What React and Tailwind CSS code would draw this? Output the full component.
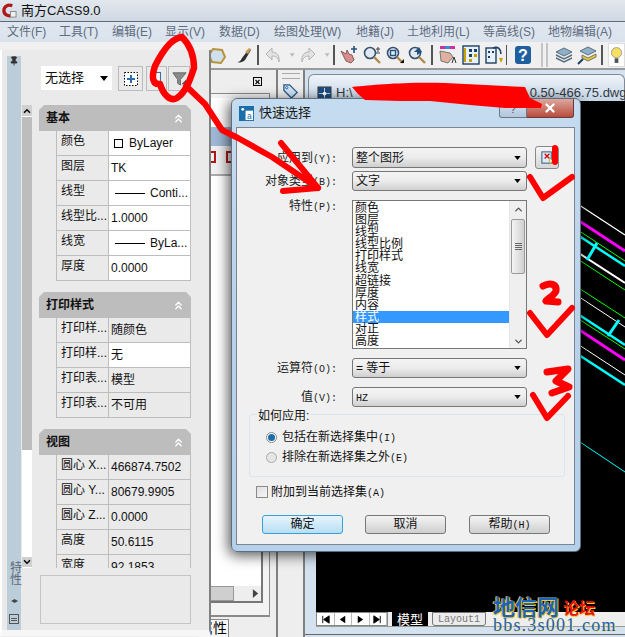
import React from "react";
import { ChevronsUp, ChevronUp, ChevronDown, X, Pin } from "lucide-react";

const Lat = ({ children }) => <span className="[font-family:'Liberation_Mono',monospace] text-[10px]">{children}</span>;

const menus = [
  ["文件(F)", "w-[52px]"], ["工具(T)", "w-[53px]"], ["编辑(E)", "w-[53px]"], ["显示(V)", "w-[54px]"], ["数据(D)", "w-[55px]"],
  ["绘图处理(W)", "w-[82px]"], ["地籍(J)", "w-[51px]"], ["土地利用(L)", "w-[76px]"], ["等高线(S)", "w-[65px]"], ["地物编辑(A)", "w-[70px]"],
];

const Sep = ({ c = "mx-[4px]" }) => <div className={`w-[2px] h-[20px] bg-[#555] ${c}`} />;

const Ic = ({ className = "", children }) => (
  <svg viewBox="0 0 20 20" className={`w-[20px] h-[20px] shrink-0 ${className}`}>{children}</svg>
);

const Mag = ({ inner }) => (<>
  <circle cx="8" cy="8" r="5.5" fill="#dfeaf5" stroke="#37506e" strokeWidth="1.6" />
  <path d="M12 12l6 6" stroke="#b08a4a" strokeWidth="2.4" />
  {inner}
</>);

function Toolbar() {
  return (
    <div className="h-[26px] bg-[#f0f0f0] flex items-center pl-[207px] border-b-0">
      <Ic><path d="M6 4l9 1 3 7-4 6-9-1-3-7z" fill="#cfe0f0" stroke="#b9933a" strokeWidth="2" /></Ic>
      <Ic className="ml-[6px]"><path d="M4 17c3 0 4-2 5-4l7-9 2 1-6 10c-2 2-5 3-8 2z" fill="#2e2e2e" /><path d="M12 7l4-4 2 1-3 5z" fill="#c79a55" /></Ic>
      <Sep />
      <Ic><path d="M9 3L3 9l6 6v-4c4 0 6 2 7 6 1-6-2-10-7-10z" fill="#e2e2e2" stroke="#b3b3b3" /></Ic>
      <svg viewBox="0 0 10 10" className="w-[10px] h-[10px] ml-[5px]"><path d="M2 3h6l-3 4z" fill="#bbb" /></svg>
      <Ic className="ml-[2px]"><path d="M11 3l6 6-6 6v-4c-4 0-6 2-7 6-1-6 2-10 7-10z" fill="#e2e2e2" stroke="#b3b3b3" /></Ic>
      <svg viewBox="0 0 10 10" className="w-[10px] h-[10px] ml-[5px]"><path d="M2 3h6l-3 4z" fill="#bbb" /></svg>
      <Sep c="ml-[2px] mr-[4px]" />
      <Ic><path d="M2 6l5 3 1-4 2 4 3 1 2 5-3 3-5-2z" fill="#d58f8f" stroke="#8c5a5a" /><path d="M15 1v7M12 4h6" stroke="#23527c" strokeWidth="1.6" /></Ic>
      <Ic className="ml-[3px]"><Mag inner={<path d="M16 2v5M14 4h4M14 8h4" stroke="#444" strokeWidth="1" />} /></Ic>
      <Ic className="ml-[3px]"><Mag inner={<><rect x="5.5" y="5.5" width="5" height="5" fill="none" stroke="#23527c" strokeWidth="1.4" /><path d="M15 18h4v-4z" fill="#111" /></>} /></Ic>
      <Ic className="ml-[2px]"><Mag inner={<path d="M12 2L7 7h3v3l5-3z" fill="#23527c" />} /></Ic>
      <Sep c="mx-[4px]" />
      <Ic className="ml-[1px]"><rect x="2" y="1" width="15" height="3" fill="#d0309a" /><rect x="7" y="1" width="5" height="3" fill="#3a8ad0" /><path d="M2 6l10 2 3 4-5 6-7-2z" fill="#e0b0a0" stroke="#777" /><path d="M14 18l2-6 2 6" fill="none" stroke="#333" /></Ic>
      <Ic className="ml-[3px]"><rect x="2" y="1" width="16" height="18" fill="#e9f1f8" stroke="#1d3f66" strokeWidth="1.4" /><path d="M4 3v14" stroke="#c9a000" strokeWidth="2" /><rect x="8" y="4" width="3" height="3" fill="#1d3f66" /><rect x="13" y="4" width="3" height="3" fill="#1d3f66" /><rect x="8" y="9" width="3" height="3" fill="#1d3f66" /><rect x="13" y="9" width="3" height="3" fill="#c9a000" /><rect x="8" y="14" width="3" height="3" fill="#c9a000" /></Ic>
      <Ic className="ml-[3px]"><rect x="2" y="3" width="10" height="15" fill="#e9f1f8" stroke="#1d3f66" strokeWidth="1.4" /><rect x="4" y="6" width="2" height="2" fill="#1d3f66" /><rect x="8" y="6" width="2" height="2" fill="#1d3f66" /><rect x="4" y="11" width="2" height="2" fill="#1d3f66" /><path d="M9 3c5-2 8 1 8 6" fill="none" stroke="#1d3f66" strokeWidth="1.6" /><path d="M15 13h4l-2 5z" fill="#c9a000" /></Ic>
      <Sep c="ml-[2px] mr-[6px]" />
      <Ic><rect x="2" y="1" width="16" height="18" rx="3" fill="#1f5fa0" /><text x="10" y="16" textAnchor="middle" fontSize="16" fontWeight="700" fill="#fff" fontFamily="Liberation Sans">?</text></Ic>
      <div className="ml-[8px] w-[8px] h-[24px] border-x-2 border-[#c4c4c4]" />
      <Ic className="ml-[6px]"><path d="M10 3l8 4-8 4-8-4z" fill="#8fb0c8" stroke="#5a6e80" /><path d="M2 10l8 4 8-4M2 13l8 4 8-4" fill="none" stroke="#5a6e80" strokeWidth="1.4" /></Ic>
      <Ic className="ml-[3px]"><path d="M11 2l8 4-8 4-8-4z" fill="#8fb0c8" stroke="#5a6e80" /><path d="M5 10l6 3 8-4v3l-8 4-6-3z" fill="#e6c53c" stroke="#776" /><path d="M1 19l5-5" stroke="#1d3f66" strokeWidth="2" /></Ic>
      <Sep c="ml-[4px] mr-[5px]" />
      <div className="w-[20px] h-[24px] bg-white border border-[#ddd] flex items-center justify-center">
        <svg viewBox="0 0 14 20" className="w-[13px] h-[19px]"><circle cx="7" cy="7" r="5.5" fill="#f6e05e" stroke="#999" /><rect x="5" y="13" width="4" height="5" fill="#555" /></svg>
      </div>
    </div>
  );
}

const drawLines = [
  ["#fff", 1.2, 316, 33, 625, 235], ["#ff00ff", 2.8, 316, 48, 625, 251], ["#00ff00", 1, 316, 58, 625, 261], ["#00ffff", 2.4, 316, 64, 625, 266],
  ["#fff", 2, 316, 83, 625, 283], ["#00ff00", 1, 316, 88, 625, 290], ["#00ff00", 1, 316, 118, 625, 318], ["#fff", 1, 316, 124, 625, 327],
  ["#00ffff", 2.4, 316, 142, 625, 345], ["#00ff00", 1, 316, 149, 625, 349], ["#ff00ff", 2.8, 316, 156, 625, 360], ["#fff", 1, 316, 173, 625, 375],
  ["#00ffff", 2.4, 316, 184, 625, 385], ["#00ffff", 3, 587, 260, 597, 243], ["#00ffff", 3, 608, 336, 619, 320], ["#00ffff", 1, 316, 266, 625, 472],
];

function Mdi() {
  return (
    <div className="flex-1 min-w-0 overflow-hidden bg-[#d4e2f0] border-l-2 border-[#808080] relative">
      <div className="h-[27px] mt-[4px] ml-[3px] rounded-t-[6px] border border-[#808a96] border-b-0 bg-gradient-to-b from-[#eef3f8] to-[#c5d6e7] flex items-start pl-[8px] pt-[11px]">
        <svg viewBox="0 0 16 16" className="w-[15px] h-[15px] shrink-0"><rect x="1" y="1" width="14" height="14" fill="#1d4c80" stroke="#444" /><path d="M8 2v12M2 8h12" stroke="#bde" /><circle cx="8" cy="8" r="2" fill="#fff" /></svg>
        <span className="ml-[4px] text-[13px] leading-[14px] text-[#333a44] whitespace-nowrap">H:\</span>
        <span className="ml-[177px] text-[13px] leading-[14px] text-[#333a44] whitespace-nowrap">0.50-466.75.dwg</span>
      </div>
      <div className="ml-[11px] h-[511px] bg-black relative">
        <svg viewBox="316 101 309 511" className="w-[309px] h-[511px] block">
          {drawLines.map(([c, w, a, b, d, e], i) => <line key={i} x1={a} y1={b} x2={d} y2={e} stroke={c} strokeWidth={w} />)}
        </svg>
      </div>
      <div className="ml-[11px] h-[15px] bg-[#eeeeee] flex items-stretch border-b border-[#9a9a9a]">
        <div className="w-[72px] flex border border-[#888] bg-white">
          {[
            <path key="a" d="M3 2v8M10 2v8L4 6z" stroke="#000" fill="#000" />,
            <path key="b" d="M9 2v8L3 6z" fill="#000" />,
            <path key="c" d="M3 2v8l6-4z" fill="#000" />,
            <path key="d" d="M2 2v8l6-4zM9 2v8" stroke="#000" fill="#000" />,
          ].map((p) => (
            <div key={p.key} className="flex-1 flex items-center justify-center border-r border-[#bbb]">
              <svg viewBox="0 0 12 12" className="w-[11px] h-[11px]">{p}</svg>
            </div>
          ))}
        </div>
        <div className="ml-[4px] w-[36px] bg-black text-white text-[13px] leading-[15px] text-center">模型</div>
        <div className="ml-[4px] w-[54px] border border-[#777] bg-[#ececec] text-[#777] text-[10px] leading-[13px] text-center [font-family:'Liberation_Mono',monospace] rounded-b-[3px]">Layout1</div>
      </div>
      <div className="h-[7px]" />
      <div className="h-[1px] bg-[#666]" />
      <div className="absolute left-[188px] top-[529px] w-[132px] h-[34px] [font-family:'Liberation_Serif','Noto_Sans_CJK_SC',serif]">
        <div className="flex items-end leading-[18px] whitespace-nowrap">
          <span className="text-[22px] leading-[18px] font-bold text-[#1c63b8] [text-shadow:1px_1px_0_#f0c830,-1px_0_0_#f0c830]">地信网</span>
          <span className="text-[16px] leading-[16px] ml-[4px] font-bold text-[#e81010] [text-shadow:1px_1px_0_#f0c830]">论坛</span>
        </div>
        <div className="text-[18px] leading-[16px] text-[#1c63b8] tracking-[1.2px] [text-shadow:1px_1px_0_#f6de80] whitespace-nowrap">bbs.3s001.com</div>
      </div>
    </div>
  );
}

function LeftDock() {
  return (
    <div className="w-[303px] bg-[#eeeeee] flex">
      <div className="w-[276px] flex flex-col">
        <div className="h-[23px] flex justify-end items-center pr-[14px]">
          <div className="w-[9px] h-[9px] border border-black flex items-center justify-center"><X size={8} strokeWidth={4} /></div>
        </div>
        <div className="ml-[208px] mr-[6px] h-[524px] border-t border-r border-b-2 border-[#8a8a8a] bg-[#f3f3f3] pr-[6px] pb-[12px] pt-[4px]">
          <div className="h-full bg-white border-r-2 border-b-2 border-[#777] flex flex-col">
            <div className="h-[29px]" />
            <div className="h-[19px] bg-[#9db7d4]" />
            <div className="h-[30px] bg-[#f0f0f0] border-b-2 border-[#aaa] flex gap-[10px] pl-[2px] pt-[5px]">
              <div className="w-[6px] h-[12px] border-y-2 border-r-2 border-[#b01818]" />
              <div className="w-[8px] h-[12px] border-2 border-[#b01818]" />
            </div>
            <div className="flex-1" />
            <div className="h-[15px] bg-[#eeeeee] flex items-center justify-end pr-[2px]">
              <div className="flex-1 h-full bg-[#cfcfcf] mr-[18px] border border-[#999]" />
              <svg viewBox="0 0 8 10" className="w-[7px] h-[9px]"><path d="M1 0l6 5-6 5z" fill="#444" /></svg>
            </div>
          </div>
        </div>
        <div className="ml-[199px] w-[30px] h-[18px] border-r border-t border-[#888] text-[14px] leading-[17px] text-right whitespace-nowrap mt-[2px] bg-[#f6f6f6] text-black pr-[1px]">属性</div>
      </div>
      <div className="w-[27px] border-l-2 border-[#808080] flex flex-col items-center pt-[3px]">
        <div className="w-[18px] h-[6px] border-y border-[#aaa]" />
        <svg viewBox="0 0 18 18" className="w-[17px] h-[17px] mt-[3px]"><path d="M2 3h6l8 8-6 6-8-8z" fill="#cfe2f5" stroke="#2a5c8e" strokeWidth="1.4" /><circle cx="5" cy="6" r="1.2" fill="#fff" stroke="#2a5c8e" /></svg>
      </div>
    </div>
  );
}

const Row = ({ k, v, white }) => (
  <div className="flex h-[25px] border-b border-[#bdbdbd] ml-[17px] border-l">
    <div className="w-[52px] border-r border-[#bdbdbd] text-[12px] leading-[20px] pl-[4px] whitespace-nowrap overflow-hidden bg-[#eaeaea]">{k}</div>
    <div className={`flex-1 text-[12px] leading-[24px] pl-[2px] whitespace-nowrap overflow-hidden border-r border-[#bdbdbd] ${white ? "bg-white" : "bg-[#eaeaea]"}`}>{v}</div>
  </div>
);

const Line = ({ t }) => (
  <div className="flex items-center pl-[4px] gap-[5px]"><span className="w-[30px] h-[1px] bg-black shrink-0" /><span>{t}</span></div>
);

const Header = ({ t }) => (
  <div className="h-[26px] bg-[#bdbdbd] [clip-path:polygon(5px_0,calc(100%-5px)_0,100%_5px,100%_100%,0_100%,0_5px)] flex items-center justify-between pl-[7px] pr-[6px] text-[12px] font-bold">
    <span>{t}</span>
    <ChevronsUp size={13} color="#fff" strokeWidth={2.4} />
  </div>
);

function Palette() {
  return (
    <div className="absolute left-0 top-[50px] w-[211px] h-[586px] bg-[#eaeaea] border-l-2 border-white border-r-2 border-r-[#808080] border-b-[6px] border-b-[#f6f6f6] flex">
      <div className="ml-[5px] w-[14px] mt-[6px] bg-[#bccdda] flex flex-col items-center">
        <Pin size={10} fill="#333" color="#333" />
        <div className="flex-1" />
        <div className="[writing-mode:vertical-rl] text-[12px] text-[#5a6a78] leading-[14px] -mr-[1px]">特性</div>
        <div className="text-[8px] text-[#444] mt-[10px] tracking-[-1px]">◂▸</div>
        <div className="w-[10px] h-[10px] mt-[7px] mb-[6px] border border-[#555] flex flex-col justify-center gap-[1px] px-[1px]">
          <div className="h-[1px] bg-[#555]" /><div className="h-[1px] bg-[#555]" />
        </div>
      </div>
      <div className="flex-1 flex flex-col min-w-0">
        <div className="h-[55px] pt-[16px] pl-[20px] flex gap-[6px]">
          <div className="w-[71px] h-[24px] bg-white flex items-center justify-between px-[4px] text-[13px]">
            <span>无选择</span>
            <svg viewBox="0 0 8 5" className="w-[8px] h-[5px]"><path d="M0 0h8L4 5z" fill="#000" /></svg>
          </div>
          <div className="w-[25px] h-[25px] border border-[#bbb] flex items-center justify-center">
            <svg viewBox="0 0 16 16" className="w-[16px] h-[16px]"><rect x="1.5" y="1.5" width="13" height="13" fill="#fff" stroke="#000" strokeDasharray="1.5 1.5" /><path d="M8 4v8M4 8h8" stroke="#2a6cb0" strokeWidth="2" /></svg>
          </div>
          <div className="-ml-[3px] w-[21px] h-[25px] border border-[#bbb] flex items-center justify-center">
            <div className="w-[9px] h-[13px] border border-[#3a6ea8] bg-[#eef4fb]" />
          </div>
          <div className="-ml-[5px] w-[22px] h-[25px] border border-[#bbb] flex items-center justify-center">
            <svg viewBox="0 0 18 18" className="w-[17px] h-[17px]"><path d="M2 3h14L10 10v6l-3-2v-4z" fill="#8a8a8a" stroke="#666" /><path d="M11 15l5-5v5z" fill="#555" /></svg>
          </div>
        </div>
        <div className="h-[463px] flex overflow-hidden">
          <div className="ml-[1px] w-[10px] flex flex-col bg-white">
            <div className="h-[11px] bg-[#d0d0d0] flex items-center justify-center"><ChevronUp size={10} strokeWidth={4} /></div>
            <div className="h-[333px] mt-[1px] bg-[#bdbdbd]" />
            <div className="flex-1" />
            <div className="h-[10px] mb-[1px] bg-[#d0d0d0] flex items-center justify-center"><ChevronDown size={10} strokeWidth={4} /></div>
          </div>
          <div className="w-[152px] ml-[7px]">
            <Header t="基本" />
            <Row white k="颜色" v={<span className="flex items-center gap-[6px] pl-[3px]"><span className="w-[9px] h-[9px] border border-black" />ByLayer</span>} />
            <Row white k="图层" v="TK" />
            <Row white k="线型" v={<Line t="Conti..." />} />
            <Row white k="线型比..." v="1.0000" />
            <Row white k="线宽" v={<Line t="ByLa..." />} />
            <Row white k="厚度" v="0.0000" />
            <div className="h-[11px]" />
            <Header t="打印样式" />
            <Row k="打印样..." v="随颜色" />
            <Row white k="打印样..." v="无" />
            <Row k="打印表..." v="模型" />
            <Row k="打印表..." v="不可用" />
            <div className="h-[11px]" />
            <Header t="视图" />
            <Row k="圆心 X..." v="466874.7502" />
            <Row k="圆心 Y..." v="80679.9905" />
            <Row k="圆心 Z..." v="0.0000" />
            <Row k="高度" v="50.6115" />
            <Row k="宽度" v="92.1853" />
          </div>
        </div>
        <div className="ml-[19px] mt-[7px] w-[151px] h-[49px] border border-[#c4c4c4]" />
      </div>
    </div>
  );
}

const Combo = ({ t, mt = "", h = "h-[21px]" }) => (
  <div className={`w-[175px] ${h} ${mt} rounded-[3px] border border-[#777] bg-gradient-to-b from-[#f4f4f4] via-[#ececec] to-[#cfcfcf] flex items-center justify-between pl-[3px] pr-[5px] text-[12px] shrink-0`}>
    <span>{t}</span>
    <svg viewBox="0 0 8 5" className="w-[7px] h-[4px]"><path d="M0 0h8L4 5z" fill="#000" /></svg>
  </div>
);

const Label = ({ children, cls = "" }) => (
  <div className={`w-[100px] mr-[15px] text-right text-[12px] text-[#222] whitespace-nowrap shrink-0 ${cls}`}>{children}</div>
);

const DBtn = ({ children, primary }) => (
  <div className={`w-[81px] h-[19px] rounded-[3px] border text-[12px] leading-[17px] text-center ${primary ? "border-[#3a9fd8] bg-gradient-to-b from-[#e6f5fd] to-[#b8def2]" : "border-[#777] bg-gradient-to-b from-[#f4f4f4] to-[#cfcfcf]"}`}>{children}</div>
);

const listItems = ["颜色", "图层", "线型", "线型比例", "打印样式", "线宽", "超链接", "厚度", "内容", "样式", "对正", "高度"];

function Dialog() {
  return (
    <div className="absolute left-[231px] top-[98px] w-[350px] h-[454px] rounded-[6px] bg-gradient-to-b from-[#c5dcf0] via-[#b9d1ea] to-[#b4d0ea] border border-[#5e6e7e] shadow-[-2px_3px_14px_rgba(0,0,0,0.7)] flex flex-col">
      <div className="h-[28px] flex items-start relative shrink-0">
        <svg viewBox="0 0 16 16" className="w-[15px] h-[15px] ml-[7px] mt-[7px]"><rect width="16" height="16" fill="#1b6ea8" /><rect x="7" y="5" width="8" height="10" fill="#fff" /><text x="11" y="14" textAnchor="middle" fontSize="9" fill="#1b6ea8" fontFamily="Liberation Sans">a</text><circle cx="4" cy="3.5" r="1.5" fill="#fff" /></svg>
        <span className="ml-[5px] mt-[4px] text-[13px] text-[#1b1b1b]">快速选择</span>
        <div className="absolute right-[6px] top-0 flex">
          <div className="w-[28px] h-[19px] bg-gradient-to-b from-[#dbe7f3] to-[#b2c7dc] border border-[#6b7a88] border-t-0 rounded-bl-[3px] flex items-end justify-center text-[10px] text-[#444]">?</div>
          <div className="w-[47px] h-[19px] bg-gradient-to-b from-[#dba79f] to-[#b84a3c] border border-[#6b3a34] border-l-0 border-t-0 rounded-br-[3px] flex items-center justify-center">
            <X size={14} color="#fff" strokeWidth={4} />
          </div>
        </div>
      </div>
      <div className="ml-[4px] mr-[5px] mb-[6px] flex-1 bg-[#f0f0f0] border border-[#7a8591] pt-[18px] text-[#111]">
        <div className="flex items-center">
          <Label>应用到<Lat>(Y):</Lat></Label>
          <Combo t="整个图形" />
          <div className="ml-[8px] w-[24px] h-[23px] rounded-[3px] border border-[#888] bg-gradient-to-b from-[#f6f6f6] to-[#d6d6d6] flex items-center justify-center">
            <svg viewBox="0 0 16 16" className="w-[15px] h-[15px]"><rect x="2" y="2" width="10" height="12" fill="#dfeaf6" stroke="#23527c" /><path d="M5 4l5 5M10 4l-5 5" stroke="#d01010" strokeWidth="1.5" /><path d="M10 8v7l2-2 3 0z" fill="#f6e9a6" stroke="#a08a30" strokeWidth=".6" /></svg>
          </div>
        </div>
        <div className="flex items-center mt-[2px]">
          <Label>对象类型<Lat>(B):</Lat></Label>
          <Combo t="文字" h="h-[20px]" />
        </div>
        <div className="flex items-start mt-[9px]">
          <Label cls="-mt-[3px]">特性<Lat>(P):</Lat></Label>
          <div className="w-[175px] h-[149px] border border-[#777] bg-white flex overflow-hidden">
            <div className="flex-1 text-[12px] leading-[12.1px] pt-[1px]">
              {listItems.map((s) => (
                <div key={s} className={`h-[12.1px] pl-[2px] whitespace-nowrap ${s === "样式" ? "bg-[#3399ff] text-white" : ""}`}>{s}</div>
              ))}
            </div>
            <div className="w-[17px] bg-[#efefef] flex flex-col items-center border-l border-[#e6e6e6]">
              <ChevronUp size={11} color="#555" strokeWidth={3} className="mt-[3px]" />
              <div className="w-[14px] h-[55px] mt-[4px] rounded-[2px] border border-[#9a9a9a] bg-gradient-to-r from-[#f4f4f4] to-[#d0d0d0] flex flex-col items-center justify-center gap-[1px]">
                <div className="w-[7px] h-[1px] bg-[#666]" /><div className="w-[7px] h-[1px] bg-[#666]" /><div className="w-[7px] h-[1px] bg-[#666]" /><div className="w-[7px] h-[1px] bg-[#666]" />
              </div>
              <div className="flex-1" />
              <ChevronDown size={11} color="#555" strokeWidth={3} className="mb-[1px]" />
            </div>
          </div>
        </div>
        <div className="flex items-center mt-[9px]">
          <Label>运算符<Lat>(O):</Lat></Label>
          <Combo t="= 等于" h="h-[20px]" />
        </div>
        <div className="flex items-center mt-[9px]">
          <Label>值<Lat>(V):</Lat></Label>
          <Combo t={<Lat>HZ</Lat>} h="h-[20px]" />
        </div>
        <div className="relative ml-[12px] mt-[7px] w-[316px] h-[63px] rounded-[3px] border border-[#dce5ec] pt-[12px] pl-[16px] text-[12px]">
          <div className="absolute left-[7px] -top-[8px] bg-[#f0f0f0] px-[1px]">如何应用:</div>
          <div className="flex items-center gap-[5px] h-[20px]">
            <span className="w-[11px] h-[11px] rounded-full border border-[#888] bg-white flex items-center justify-center"><span className="w-[7px] h-[7px] rounded-full bg-[#1a6fa8]" /></span>
            <span>包括在新选择集中<Lat>(I)</Lat></span>
          </div>
          <div className="flex items-center gap-[5px] h-[20px]">
            <span className="w-[11px] h-[11px] rounded-full border border-[#aaa] bg-[#e6e6e6]" />
            <span>排除在新选择集之外<Lat>(E)</Lat></span>
          </div>
        </div>
        <div className="flex items-center ml-[19px] mt-[8px] gap-[3px] text-[12px] h-[13px]">
          <span className="w-[12px] h-[12px] border border-[#8a8a8a] bg-gradient-to-br from-[#e0e0e0] to-[#f6f6f6]" />
          <span>附加到当前选择集<Lat>(A)</Lat></span>
        </div>
        <div className="flex ml-[25px] mt-[17px] gap-[22px]">
          <DBtn primary>确定</DBtn>
          <DBtn>取消</DBtn>
          <div className="ml-[1px]"><DBtn>帮助<Lat>(H)</Lat></DBtn></div>
        </div>
      </div>
    </div>
  );
}

function Scribbles() {
  const common = { fill: "none", stroke: "#ff0000", strokeLinecap: "round", strokeLinejoin: "round" };
  return (
    <svg viewBox="0 0 625 637" className="absolute inset-0 w-[625px] h-[637px] pointer-events-none">
      <path {...common} strokeWidth="6.5" d="M182 37C172 38 163 50 155 66C151 78 153 85 160 84C163 94 170 102 177 98C186 92 190 80 194 68C194 55 189 44 182 37" />
      <path {...common} strokeWidth="6" d="M186 86L205 104L222 130L238 138L272 157L318 188" />
      <path {...common} strokeWidth="6" d="M281 143L318 188L283 191" />
      <path fill="#ff0000" d="M352 87C375 85 400 82 445 83L525 87L530 98L542 104L541 108L505 108L470 105L430 101L400 101L365 100L358 94z" />
      <path {...common} strokeWidth="6" d="M555 148V162" />
      <path {...common} strokeWidth="6" d="M530 177L543 198L572 177" />
      <path {...common} strokeWidth="7" d="M543 286C550 282 557 284 556 291C554 296 548 298 546 301L558 302" />
      <path {...common} strokeWidth="6" d="M530 313L547 335L572 308" />
      <path {...common} strokeWidth="7" d="M547 372L568 369L556 381L569 387L552 393" />
      <path {...common} strokeWidth="6" d="M533 395L547 418L568 396" />
    </svg>
  );
}

export default function App() {
  return (
    <div className="relative w-[625px] h-[637px] overflow-hidden bg-[#eeeeee] flex flex-col [font-family:'Liberation_Sans','Noto_Sans_CJK_SC',sans-serif] text-[#111]">
      <div className="h-[21px] bg-gradient-to-b from-[#e3e8ef] to-[#cfd8e2] flex items-center pl-[2px] shrink-0">
        <svg viewBox="0 0 16 16" className="w-[15px] h-[15px]"><path d="M11 3C6 1 2 4 2 8s4 7 9 5" fill="none" stroke="#b01818" strokeWidth="3.5" /><rect x="9" y="9" width="6" height="6" fill="#eee" stroke="#888" /></svg>
        <span className="ml-[4px] text-[13px] text-[#111]">南方CASS9.0</span>
      </div>
      <div className="h-[21px] bg-gradient-to-b from-[#dfe6ef] to-[#dae3ed] border-t border-[#5f6b78] flex items-center pl-[7px] text-[12px] text-[#5e6c7e] shrink-0 whitespace-nowrap overflow-hidden">
        {menus.map(([m, w]) => <div key={m} className={`${w} shrink-0`}>{m}</div>)}
      </div>
      <Toolbar />
      <div className="h-[2px] bg-[#9a9a9a] shrink-0" />
      <div className="flex-1 flex min-h-0">
        <LeftDock />
        <Mdi />
      </div>
      <Palette />
      <Dialog />
      <Scribbles />
    </div>
  );
}
